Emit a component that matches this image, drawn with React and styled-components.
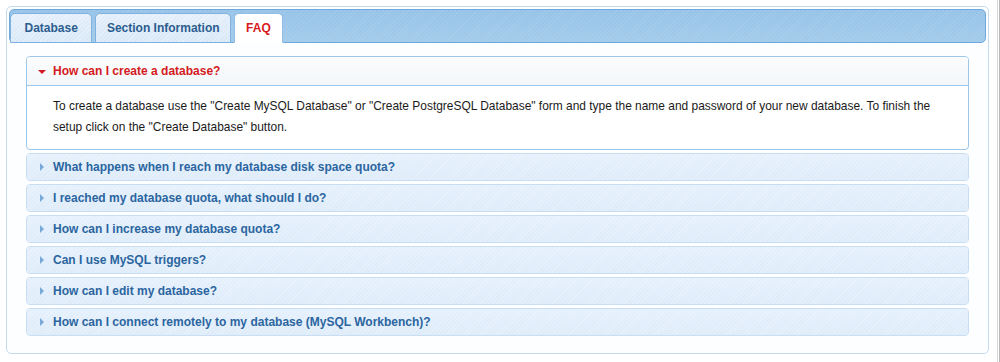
import { useState } from "react";
import styled, { createGlobalStyle } from "styled-components";

const GlobalStyle = createGlobalStyle`
  html, body {
    margin: 0;
    padding: 0;
    background: #ffffff;
  }
  body {
    font-family: "Liberation Sans", Arial, sans-serif;
    font-size: 12px;
  }
`;

const stripes = (a) => `repeating-linear-gradient(
  -45deg,
  rgba(255, 255, 255, ${a}) 0px,
  rgba(255, 255, 255, ${a}) 1px,
  rgba(255, 255, 255, 0) 1px,
  rgba(255, 255, 255, 0) 3px
)`;

const Page = styled.div`
  display: flex;
  padding: 6px 10px 8px 6px;
  border-right: 1px solid #b9b9b9;
  width: 1000px;
  box-sizing: border-box;
  position: relative;
  &::after {
    content: "";
    position: absolute;
    right: 1px;
    top: 0;
    bottom: 0;
    width: 1px;
    background: #d6d6d6;
  }
`;

const Panel = styled.div`
  flex: 1;
  height: 348px;
  box-sizing: border-box;
  border: 1px solid #c3dbef;
  border-radius: 5px;
  background: #fdfeff;
  padding: 2px;
  display: flex;
  flex-direction: column;
`;

const TabBar = styled.div`
  height: 34px;
  box-sizing: border-box;
  border: 1px solid #6ea8dc;
  border-radius: 5px;
  background: ${stripes(0.08)}, linear-gradient(#97c3e8, #a3cbea);
  display: flex;
  align-items: flex-end;
  gap: 3px;
  padding: 0;
`;

const Tab = styled.button`
  height: 30px;
  margin-bottom: -1px;
  box-sizing: border-box;
  padding: 0 ${(p) => p.$pad}px 1px;
  border: 1px solid ${(p) => (p.$active ? "#8fbde6" : "#7fb2df")};
  border-bottom: ${(p) => (p.$active ? "1px solid #ffffff" : "1px solid #7fb2df")};
  border-radius: 5px 5px 0 0;
  background: ${(p) =>
    p.$active ? "#ffffff" : `${stripes(0.3)}, linear-gradient(#e3eefa, #d8e8f7)`};
  color: ${(p) => (p.$active ? "#d71920" : "#2c5d8f")};
  font-family: "Liberation Sans", Arial, sans-serif;
  font-size: 12px;
  font-weight: bold;
  cursor: pointer;
  display: flex;
  align-items: center;
`;

const Content = styled.div`
  padding: 13px 17px 0 17px;
  display: flex;
  flex-direction: column;
  gap: 3px;
`;

const Item = styled.div`
  border: 1px solid ${(p) => (p.$open ? "#9cc6ea" : "#c9def2")};
  border-radius: 4px;
  background: ${(p) => (p.$open ? "#ffffff" : "transparent")};
  overflow: hidden;
`;

const Header = styled.div`
  height: ${(p) => (p.$open ? 28 : 26)}px;
  display: flex;
  align-items: center;
  padding-left: 11px;
  gap: 7px;
  background: ${(p) =>
    p.$open
      ? "linear-gradient(#fbfcfd, #f3f7fa)"
      : `${stripes(0.25)}, linear-gradient(#e4f0fc, #deebf9)`};
  border-bottom: ${(p) => (p.$open ? "1px solid #9cc6ea" : "none")};
  color: ${(p) => (p.$open ? "#d41a22" : "#2b65a0")};
  font-weight: bold;
  font-size: 12px;
  cursor: pointer;
`;

const Arrow = styled.span`
  width: 0;
  height: 0;
  ${(p) =>
    p.$open
      ? `
    border-left: 4px solid transparent;
    border-right: 4px solid transparent;
    border-top: 4px solid #d41a22;
    margin-top: 1px;
  `
      : `
    border-top: 4px solid transparent;
    border-bottom: 4px solid transparent;
    border-left: 4px solid #79a9d6;
    margin-left: 2px;
    margin-right: 2px;
  `}
`;

const Body = styled.div`
  padding: 10px 20px 11px 26px;
  line-height: 21px;
  color: #1b1b1b;
  font-size: 11.95px;
`;

const tabs = [
  { label: "Database", pad: 13.5 },
  { label: "Section Information", pad: 10.5 },
  { label: "FAQ", pad: 11 },
];

const faqs = [
  {
    q: "How can I create a database?",
    a: 'To create a database use the "Create MySQL Database" or "Create PostgreSQL Database" form and type the name and password of your new database. To finish the setup click on the "Create Database" button.',
  },
  { q: "What happens when I reach my database disk space quota?", a: "" },
  { q: "I reached my database quota, what should I do?", a: "" },
  { q: "How can I increase my database quota?", a: "" },
  { q: "Can I use MySQL triggers?", a: "" },
  { q: "How can I edit my database?", a: "" },
  { q: "How can I connect remotely to my database (MySQL Workbench)?", a: "" },
];

export default function App() {
  const [activeTab, setActiveTab] = useState(2);
  const [open, setOpen] = useState(0);

  return (
    <>
      <GlobalStyle />
      <Page>
        <Panel>
          <TabBar>
            {tabs.map((t, i) => (
              <Tab
                key={t.label}
                $pad={t.pad}
                $active={i === activeTab}
                onClick={() => setActiveTab(i)}
              >
                {t.label}
              </Tab>
            ))}
          </TabBar>
          <Content>
            {faqs.map((f, i) => (
              <Item key={f.q} $open={i === open}>
                <Header $open={i === open} onClick={() => setOpen(i === open ? -1 : i)}>
                  <Arrow $open={i === open} />
                  {f.q}
                </Header>
                {i === open && <Body>{f.a}</Body>}
              </Item>
            ))}
          </Content>
        </Panel>
      </Page>
    </>
  );
}
